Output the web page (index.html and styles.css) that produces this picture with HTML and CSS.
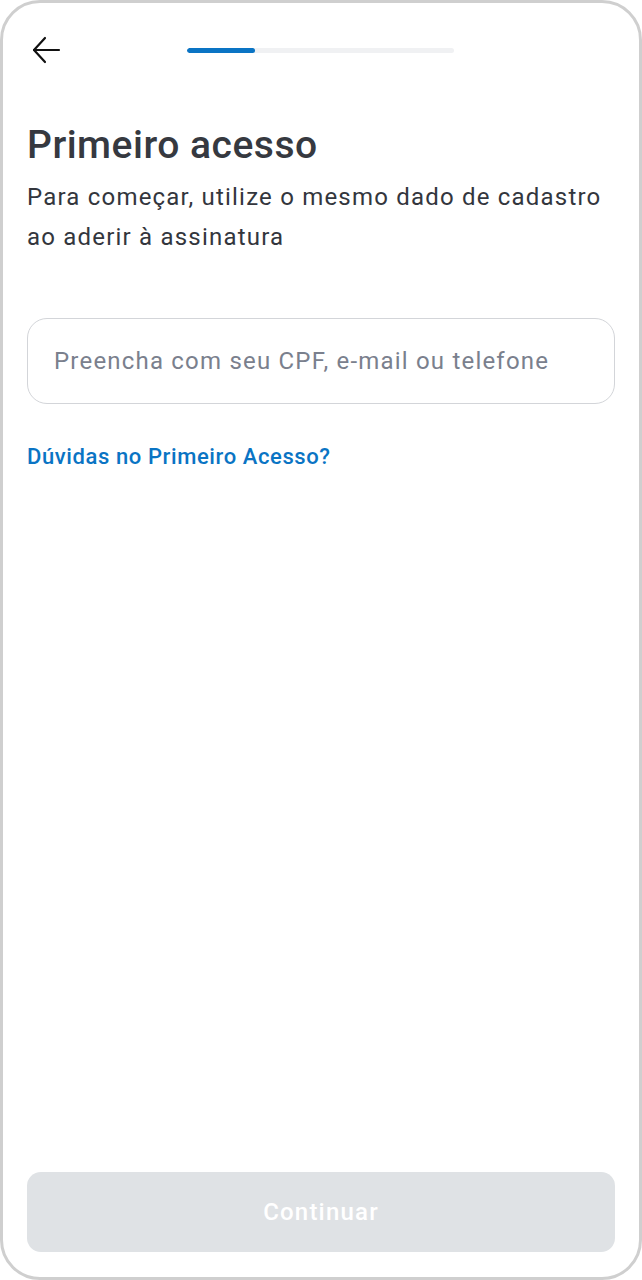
FILE: index.html
```html
<!DOCTYPE html>
<html lang="pt-BR">
<head>
<meta charset="utf-8">
<title>Primeiro acesso</title>
<link rel="stylesheet" href="styles.css">
</head>
<body>
<div class="phone">
  <header class="topbar">
    <button class="back" aria-label="Voltar">
      <svg width="30" height="28" viewBox="0 0 30 28" fill="none" stroke="#111" stroke-width="2.2" stroke-linecap="round" stroke-linejoin="round">
        <path d="M28 14H3"/>
        <path d="M14 2L3 14l11 12"/>
      </svg>
    </button>
    <div class="progress"><div class="progress-fill"></div></div>
  </header>
  <main class="content">
    <h1 class="title">Primeiro acesso</h1>
    <p class="subtitle">Para começar, utilize o mesmo dado de cadastro ao aderir à assinatura</p>
    <div class="field">
      <input class="input" type="text" placeholder="Preencha com seu CPF, e-mail ou telefone">
    </div>
    <a class="help" href="#">Dúvidas no Primeiro Acesso?</a>
  </main>
  <footer class="footer">
    <button class="continue" disabled>Continuar</button>
  </footer>
</div>
</body>
</html>
```

FILE: styles.css
```css
* { box-sizing: border-box; }
html, body { margin: 0; padding: 0; background: #fff; }
body { font-family: Roboto, "Noto Sans", sans-serif; }

.phone {
  width: 642px;
  height: 1280px;
  border: 3px solid #cfcfcf;
  border-radius: 40px;
  display: flex;
  flex-direction: column;
  background: #fff;
  overflow: hidden;
}

.topbar {
  height: 94px;
  display: flex;
  align-items: center;
  padding: 0 0 0 28px;
}

.back {
  background: none;
  border: 0;
  padding: 0;
  margin: 0;
  width: 32px;
  height: 28px;
  display: flex;
  align-items: center;
  cursor: pointer;
}

.progress {
  margin-left: 124px;
  width: 267px;
  height: 5px;
  border-radius: 3px;
  background: #f0f1f3;
  overflow: hidden;
}

.progress-fill {
  width: 68px;
  height: 100%;
  background: #0a74c4;
  border-radius: 3px;
}

.content {
  flex: 1;
  padding: 22px 24px 0 24px;
}

.title {
  margin: 0;
  font-size: 39px;
  line-height: 52px;
  font-weight: 500;
  letter-spacing: 0.5px;
  color: #363940;
}

.subtitle {
  margin: 6px 0 0 0;
  font-size: 24px;
  line-height: 40px;
  letter-spacing: 1.2px;
  color: #33363d;
}

.field {
  margin-top: 61px;
}

.input {
  width: 100%;
  height: 86px;
  border: 1.5px solid #d3d5d9;
  border-radius: 20px;
  padding: 0 26px;
  font-family: Roboto, "Noto Sans", sans-serif;
  font-size: 24px;
  letter-spacing: 1.2px;
  color: #33363d;
  outline: none;
  background: #fff;
}

.input::placeholder { color: #7a808d; }

.help {
  display: inline-block;
  margin-top: 38px;
  font-size: 22px;
  line-height: 30px;
  font-weight: 500;
  letter-spacing: 0.6px;
  color: #0a74c4;
  text-decoration: none;
}

.footer {
  padding: 0 24px 25px 24px;
}

.continue {
  width: 100%;
  height: 80px;
  border: 0;
  border-radius: 14px;
  background: #dfe2e5;
  color: #fff;
  font-family: Roboto, "Noto Sans", sans-serif;
  font-size: 24px;
  font-weight: 500;
  letter-spacing: 1.2px;
}
```
